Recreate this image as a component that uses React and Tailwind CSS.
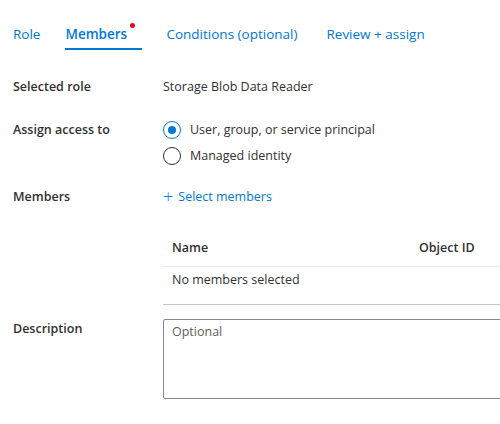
import React from "react";

function Radio({ checked, label }) {
  return (
    <div className="flex items-center h-[26px]">
      <span
        className={
          "flex items-center justify-center w-[18px] h-[18px] rounded-full border " +
          (checked ? "border-[#0078d4]" : "border-[#323130]")
        }
      >
        {checked && <span className="w-[8px] h-[8px] rounded-full bg-[#0078d4]" />}
      </span>
      <span className="ml-[9px] text-[#323130]">{label}</span>
    </div>
  );
}

export default function App() {
  return (
    <div
      className="w-[500px] h-[424px] overflow-hidden bg-white text-[12.5px] leading-[20px] text-[#323130]"
      style={{ fontFamily: '"Open Sans", "Noto Sans", sans-serif' }}
    >
      {/* Tabs */}
      <div className="flex pt-[24px] text-[13.5px] text-[#0078d4]">
        <div className="ml-[13px] pb-[4px] border-b-2 border-transparent">Role</div>
        <div className="ml-[25px] w-[77px] pb-[4px] border-b-2 border-[#0078d4] relative font-semibold">
          Members
          <span className="absolute left-[65px] -top-[1px] w-[5px] h-[5px] rounded-full bg-[#e00b1c]" />
        </div>
        <div className="ml-[24px] pb-[4px] border-b-2 border-transparent">Conditions (optional)</div>
        <div className="ml-[29px] pb-[4px] border-b-2 border-transparent">Review + assign</div>
      </div>

      <div className="grid grid-cols-[150px_1fr] pl-[13px] mt-[27px]">
        <div className="font-semibold">Selected role</div>
        <div>Storage Blob Data Reader</div>

        <div className="font-semibold mt-[20px] pt-[3px]">Assign access to</div>
        <div className="mt-[20px]">
          <Radio checked label="User, group, or service principal" />
          <Radio label="Managed identity" />
        </div>

        <div className="font-semibold mt-[18px]">Members</div>
        <div className="mt-[18px] text-[#0078d4] flex items-center">
          <span className="text-[18px] leading-[20px] font-light mr-[5px] -mt-[2px]">+</span>
          Select members
        </div>

        <div className="mt-[32px]" />
        <div className="mt-[32px]">
          <div className="flex h-[18px] items-center font-semibold">
            <div className="pl-[9px] w-[256px]">Name</div>
            <div>Object ID</div>
          </div>
          <div className="mt-[9px] border-t border-[#edebe9]" />
          <div className="h-[37px] pt-[3px] pl-[9px]">No members selected</div>
          <div className="border-t border-[#c8c6c4]" />
        </div>

        <div className="font-semibold mt-[14px]">Description</div>
        <div className="mt-[14px]">
          <div className="h-[80px] w-[360px] border border-[#8a8886] rounded-[2px] px-[8px] pt-[2px] text-[#605e5c]">
            Optional
          </div>
        </div>
      </div>
    </div>
  );
}
